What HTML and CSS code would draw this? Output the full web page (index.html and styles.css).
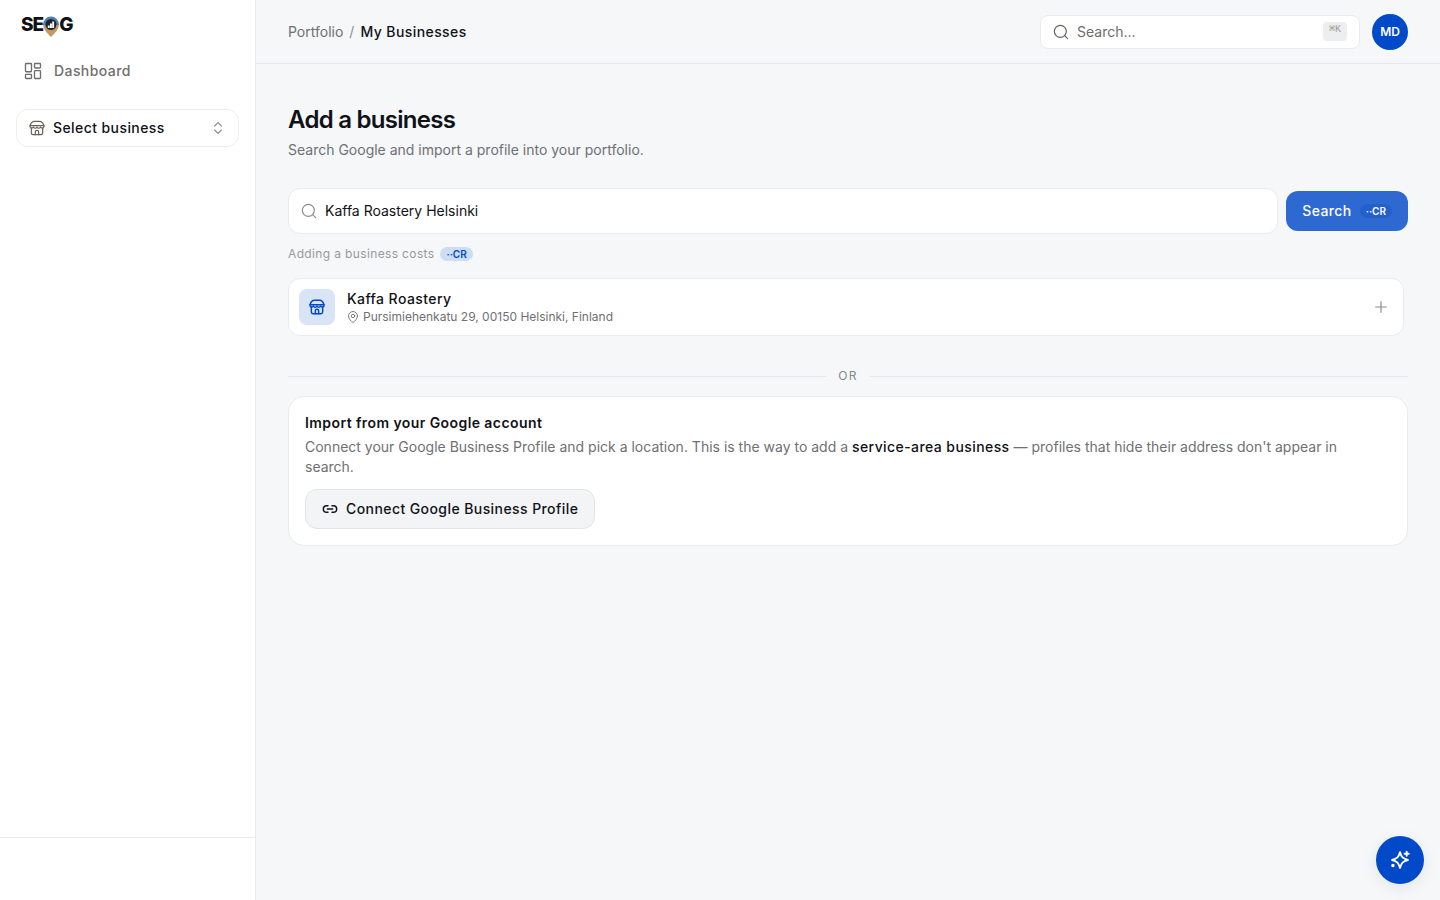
FILE: index.html
```html
<!DOCTYPE html>
<html lang="en">
<head>
  <meta charset="UTF-8">
  <meta name="viewport" content="width=device-width, initial-scale=1.0">
  <title>My Businesses</title>
  <link rel="stylesheet" href="styles.css">
</head>
<body>
  <svg class="sprite" aria-hidden="true">
    <symbol id="icon-store" viewBox="0 0 24 24">
      <path d="M3.500 12v7.500A2.500 2.500 0 0 0 6 22h12a2.500 2.500 0 0 0 2.500-2.500V12"/>
      <path d="M9.500 22v-4a2.500 2.500 0 0 1 5 0v4"/>
      <path d="M1.500 8.500C3 4 5.500 2 8 2h8c2.500 0 5 2 6.500 6.500z"/>
      <path d="M1.500 8.500v1c0 3 4 3.500 5.250 1 1.250 2.500 4 2.500 5.250 0 1.250 2.500 4 2.500 5.250 0 1.250 2.500 5.250 2 5.250-1v-1"/>
    </symbol>
    <symbol id="icon-search" viewBox="0 0 24 24">
      <circle cx="11" cy="11" r="9"/>
      <path d="m22 22-4.500-4.500"/>
    </symbol>
  </svg>

  <div class="layout">
    <aside class="sidebar">
      <a class="logo" href="#" aria-label="SEOG">
        <span>SE</span>
        <svg class="logo-pin" viewBox="0 0 16 21" aria-hidden="true">
          <path d="M0 8h16c0 5-4 9-8 13C4 17 0 13 0 8z" fill="#c39a62"/>
          <path d="M0 9a8 8.500 0 0 1 16 0z" fill="#5580ad"/>
          <circle cx="8" cy="8.500" r="5.500" fill="#1f2530"/>
          <path d="M4.800 9.500h1.900V12H4.800zM7 7.500h1.900V12H7zM9.200 5.500h1.900V12H9.200z" fill="#fff"/>
        </svg>
        <span>G</span>
      </a>
      <nav class="nav">
        <a class="nav-link" href="#">
          <svg class="icon icon-18" viewBox="0 0 24 24" aria-hidden="true">
            <rect x="2" y="2" width="8" height="11" rx="1"/>
            <rect x="14" y="2" width="8" height="6" rx="1"/>
            <rect x="14" y="11.500" width="8" height="10.500" rx="1"/>
            <rect x="2" y="16.500" width="8" height="5.500" rx="1"/>
          </svg>
          Dashboard
        </a>
      </nav>
      <div class="business-picker">
        <svg class="icon icon-16" aria-hidden="true"><use href="#icon-store"/></svg>
        <select id="business" aria-label="Select business">
          <option>Select business</option>
        </select>
        <svg class="icon icon-16 muted" viewBox="0 0 24 24" aria-hidden="true">
          <path d="m7 9 5-5 5 5"/>
          <path d="m7 15 5 5 5-5"/>
        </svg>
      </div>
      <div class="sidebar-footer"></div>
    </aside>

    <div class="page">
      <header class="topbar">
        <nav class="breadcrumb" aria-label="Breadcrumb">
          <a href="#">Portfolio</a>
          <span class="slash">/</span>
          <strong>My Businesses</strong>
        </nav>
        <div class="topbar-right">
          <div class="global-search">
            <svg class="icon icon-16" aria-hidden="true"><use href="#icon-search"/></svg>
            <input type="text" placeholder="Search..." aria-label="Search">
            <kbd>⌘K</kbd>
          </div>
          <button class="avatar" type="button" aria-label="Account">MD</button>
        </div>
      </header>

      <main class="content">
        <h1>Add a business</h1>
        <p class="subtitle">Search Google and import a profile into your portfolio.</p>

        <form class="search-form">
          <div class="search-field">
            <svg class="icon icon-16 muted" aria-hidden="true"><use href="#icon-search"/></svg>
            <input type="text" value="Kaffa Roastery Helsinki" aria-label="Business name">
          </div>
          <button class="search-button" type="button">Search <span class="credits credits-dark">··CR</span></button>
        </form>
        <p class="cost">Adding a business costs <span class="credits">··CR</span></p>

        <div class="results">
          <button class="result" type="button">
            <span class="result-icon">
              <svg class="icon icon-16 bold" aria-hidden="true"><use href="#icon-store"/></svg>
            </span>
            <span class="result-text">
              <span class="result-name">Kaffa Roastery</span>
              <span class="result-address">
                <svg class="icon icon-12" viewBox="0 0 24 24" aria-hidden="true">
                  <path d="M21 10c0 6-5.500 10.500-9 13-3.500-2.500-9-7-9-13a9 9 0 0 1 18 0z"/>
                  <circle cx="12" cy="10" r="3.500"/>
                </svg>
                Pursimiehenkatu 29, 00150 Helsinki, Finland
              </span>
            </span>
            <svg class="icon icon-16 muted" viewBox="0 0 24 24" aria-hidden="true">
              <path d="M4 12h16M12 4v16"/>
            </svg>
          </button>
        </div>

        <div class="divider">OR</div>

        <section class="import-card">
          <h2>Import from your Google account</h2>
          <p>Connect your Google Business Profile and pick a location. This is the way to add a <strong>service-area business</strong> — profiles that hide their address don't appear in search.</p>
          <button class="connect-button" type="button">
            <svg class="icon icon-16 bold" viewBox="0 0 24 24" aria-hidden="true">
              <path d="M9 17H7A5 5 0 0 1 7 7h2"/>
              <path d="M15 7h2a5 5 0 0 1 0 10h-2"/>
              <path d="M8 12h8"/>
            </svg>
            Connect Google Business Profile
          </button>
        </section>
      </main>
    </div>
  </div>

  <button class="assistant" type="button" aria-label="Assistant">
    <svg class="icon icon-20 bold" viewBox="0 0 24 24" aria-hidden="true">
      <path d="M12 2.500c1.500 6 3.500 8 9.500 9.500-6 1.500-8 3.500-9.500 9.500-1.500-6-3.500-8-9.500-9.500 6-1.500 8-3.500 9.500-9.500z"/>
      <path d="M20 2v5M17.500 4.500h5"/>
      <circle cx="3.500" cy="18.500" r="1"/>
    </svg>
  </button>
</body>
</html>
```

FILE: styles.css
```css
* {
  box-sizing: border-box;
}
body {
  margin: 0;
  font-family: Inter, "Liberation Sans", sans-serif;
  font-size: 14px;
  line-height: 20px;
  color: #101217;
  background: #f5f7f9;
}
h1, h2, p {
  margin: 0;
}
a {
  color: inherit;
  text-decoration: none;
}
button, input, select {
  font: inherit;
  letter-spacing: inherit;
  color: inherit;
}
button {
  cursor: pointer;
}
input, select {
  flex: 1;
  min-width: 0;
  padding: 0;
  border: 0;
  outline: none;
  background: transparent;
}
.sprite {
  display: none;
}
.icon {
  flex: none;
  fill: none;
  stroke: currentColor;
  stroke-width: 1.8;
  stroke-linecap: round;
  stroke-linejoin: round;
}
.icon-12 {
  width: 12px;
  height: 12px;
}
.icon-16 {
  width: 16px;
  height: 16px;
}
.icon-18 {
  width: 18px;
  height: 18px;
}
.icon-20 {
  width: 20px;
  height: 20px;
}
.muted {
  color: #918d8b;
}
.bold {
  stroke-width: 2.2;
}
.layout {
  display: flex;
  min-height: 100vh;
}

/* Labels are tracked a little wider than body text */
.nav-link,
.business-picker,
.breadcrumb strong,
.search-button,
.cost,
.result-name,
h2,
.import-card strong,
.connect-button {
  letter-spacing: 0.03em;
}

/* Sidebar */
.sidebar {
  display: flex;
  flex-direction: column;
  flex: 0 0 256px;
  background: #fff;
  border-right: 1px solid #e9ebee;
}
.logo {
  display: flex;
  align-items: center;
  height: 50px;
  padding: 0 21px;
  font-size: 19px;
  font-weight: 800;
  letter-spacing: -0.05em;
}
.logo-pin {
  width: 16px;
  height: 21px;
  margin-top: 3px;
}
.nav {
  padding: 2px 16px 0;
}
.nav-link {
  display: flex;
  align-items: center;
  gap: 12px;
  height: 38px;
  padding: 0 8px;
  font-weight: 500;
  color: #6f6d6d;
}
.business-picker {
  display: flex;
  align-items: center;
  gap: 8px;
  height: 38px;
  margin: 19px 16px 0;
  padding: 0 12px;
  color: #6b625c;
  border: 1px solid #eceef0;
  border-radius: 12px;
}
.business-picker select {
  appearance: none;
  font-weight: 500;
  color: #101217;
}
.sidebar-footer {
  height: 63px;
  margin-top: auto;
  border-top: 1px solid #e9ebee;
}

/* Top bar */
.page {
  flex: 1;
  min-width: 0;
}
.topbar {
  display: flex;
  align-items: center;
  justify-content: space-between;
  height: 64px;
  padding: 0 32px;
  border-bottom: 1px solid #e4e6ea;
}
.breadcrumb {
  display: flex;
  gap: 6px;
  color: #6f7074;
}
.breadcrumb strong {
  font-weight: 500;
  color: #101217;
}
.slash {
  color: #918d8b;
}
.topbar-right {
  display: flex;
  align-items: center;
  gap: 12px;
}
.global-search {
  display: flex;
  align-items: center;
  gap: 8px;
  width: 320px;
  height: 34px;
  padding: 0 12px;
  color: #6b625c;
  background: #fff;
  border: 1px solid #e9ebee;
  border-radius: 8px;
}
.global-search input::placeholder {
  color: #716d6b;
  opacity: 1;
}
kbd {
  height: 19px;
  padding: 0 6px;
  font-family: "Liberation Mono", monospace;
  font-size: 10px;
  line-height: 16px;
  color: #a19c98;
  background: #eceef0;
  border-radius: 4px;
}
.avatar {
  width: 36px;
  height: 36px;
  padding: 0;
  font-size: 12px;
  font-weight: 600;
  color: #fff;
  background: #0049c9;
  border: 0;
  border-radius: 50%;
}

/* Content */
.content {
  padding: 40px 32px;
}
h1 {
  font-size: 24px;
  line-height: 32px;
  font-weight: 600;
  letter-spacing: -0.03em;
}
.subtitle {
  margin-top: 4px;
  color: #6f7074;
}
.search-form {
  display: flex;
  align-items: center;
  gap: 8px;
  margin-top: 28px;
}
.search-field {
  display: flex;
  flex: 1;
  align-items: center;
  gap: 8px;
  height: 46px;
  padding: 0 12px;
  background: #fff;
  border: 1px solid #e9ebee;
  border-radius: 12px;
}
.search-button {
  display: flex;
  align-items: center;
  gap: 8px;
  height: 40px;
  padding: 0 16px;
  font-weight: 500;
  color: #fff;
  background: #2d69d1;
  border: 0;
  border-radius: 12px;
}
.credits {
  padding: 0 6px;
  font-size: 10px;
  line-height: 14px;
  font-weight: 600;
  letter-spacing: 0;
  color: #0049c9;
  background: #cdddf3;
  border-radius: 7px;
}
.credits-dark {
  color: #fff;
  background: #2360cc;
}
.cost {
  display: flex;
  align-items: center;
  gap: 6px;
  margin-top: 10px;
  font-size: 12px;
  color: #999a9d;
}
.results {
  margin-top: 14px;
  padding-right: 4px;
}
.result {
  display: flex;
  align-items: center;
  gap: 12px;
  width: 100%;
  height: 58px;
  padding: 0 14px 0 10px;
  text-align: left;
  background: #fff;
  border: 1px solid #e9ebee;
  border-radius: 12px;
}
.result-icon {
  display: grid;
  place-items: center;
  width: 36px;
  height: 36px;
  color: #0049c9;
  background: #d9e5f7;
  border-radius: 8px;
}
.result-text {
  flex: 1;
}
.result-name {
  display: block;
  font-weight: 500;
}
.result-address {
  display: flex;
  align-items: center;
  gap: 4px;
  font-size: 12px;
  line-height: 16px;
  color: #6f7074;
}
.divider {
  display: flex;
  align-items: center;
  gap: 12px;
  margin: 32px 0 12px;
  font-size: 12px;
  line-height: 16px;
  letter-spacing: 0.1em;
  color: #85878b;
}
.divider::before, .divider::after {
  content: "";
  flex: 1;
  height: 1px;
  background: #e4e6ea;
}
.import-card {
  padding: 16px;
  background: #fff;
  border: 1px solid #e9ebee;
  border-radius: 16px;
}
h2 {
  font-size: 14px;
  line-height: 20px;
  font-weight: 600;
}
.import-card p {
  margin-top: 4px;
  padding-right: 16px;
  color: #6f7074;
}
.import-card strong {
  font-weight: 500;
  color: #101217;
}
.connect-button {
  display: flex;
  align-items: center;
  gap: 8px;
  height: 40px;
  margin-top: 12px;
  padding: 0 16px;
  font-weight: 500;
  background: #f2f4f6;
  border: 1px solid #e1e4e8;
  border-radius: 12px;
}

/* Floating assistant button */
.assistant {
  position: fixed;
  right: 16px;
  bottom: 16px;
  display: grid;
  place-items: center;
  width: 48px;
  height: 48px;
  padding: 0;
  color: #fff;
  background: #0049c9;
  border: 0;
  border-radius: 50%;
  box-shadow: 0 4px 16px rgba(16, 24, 40, 0.08);
}
```
